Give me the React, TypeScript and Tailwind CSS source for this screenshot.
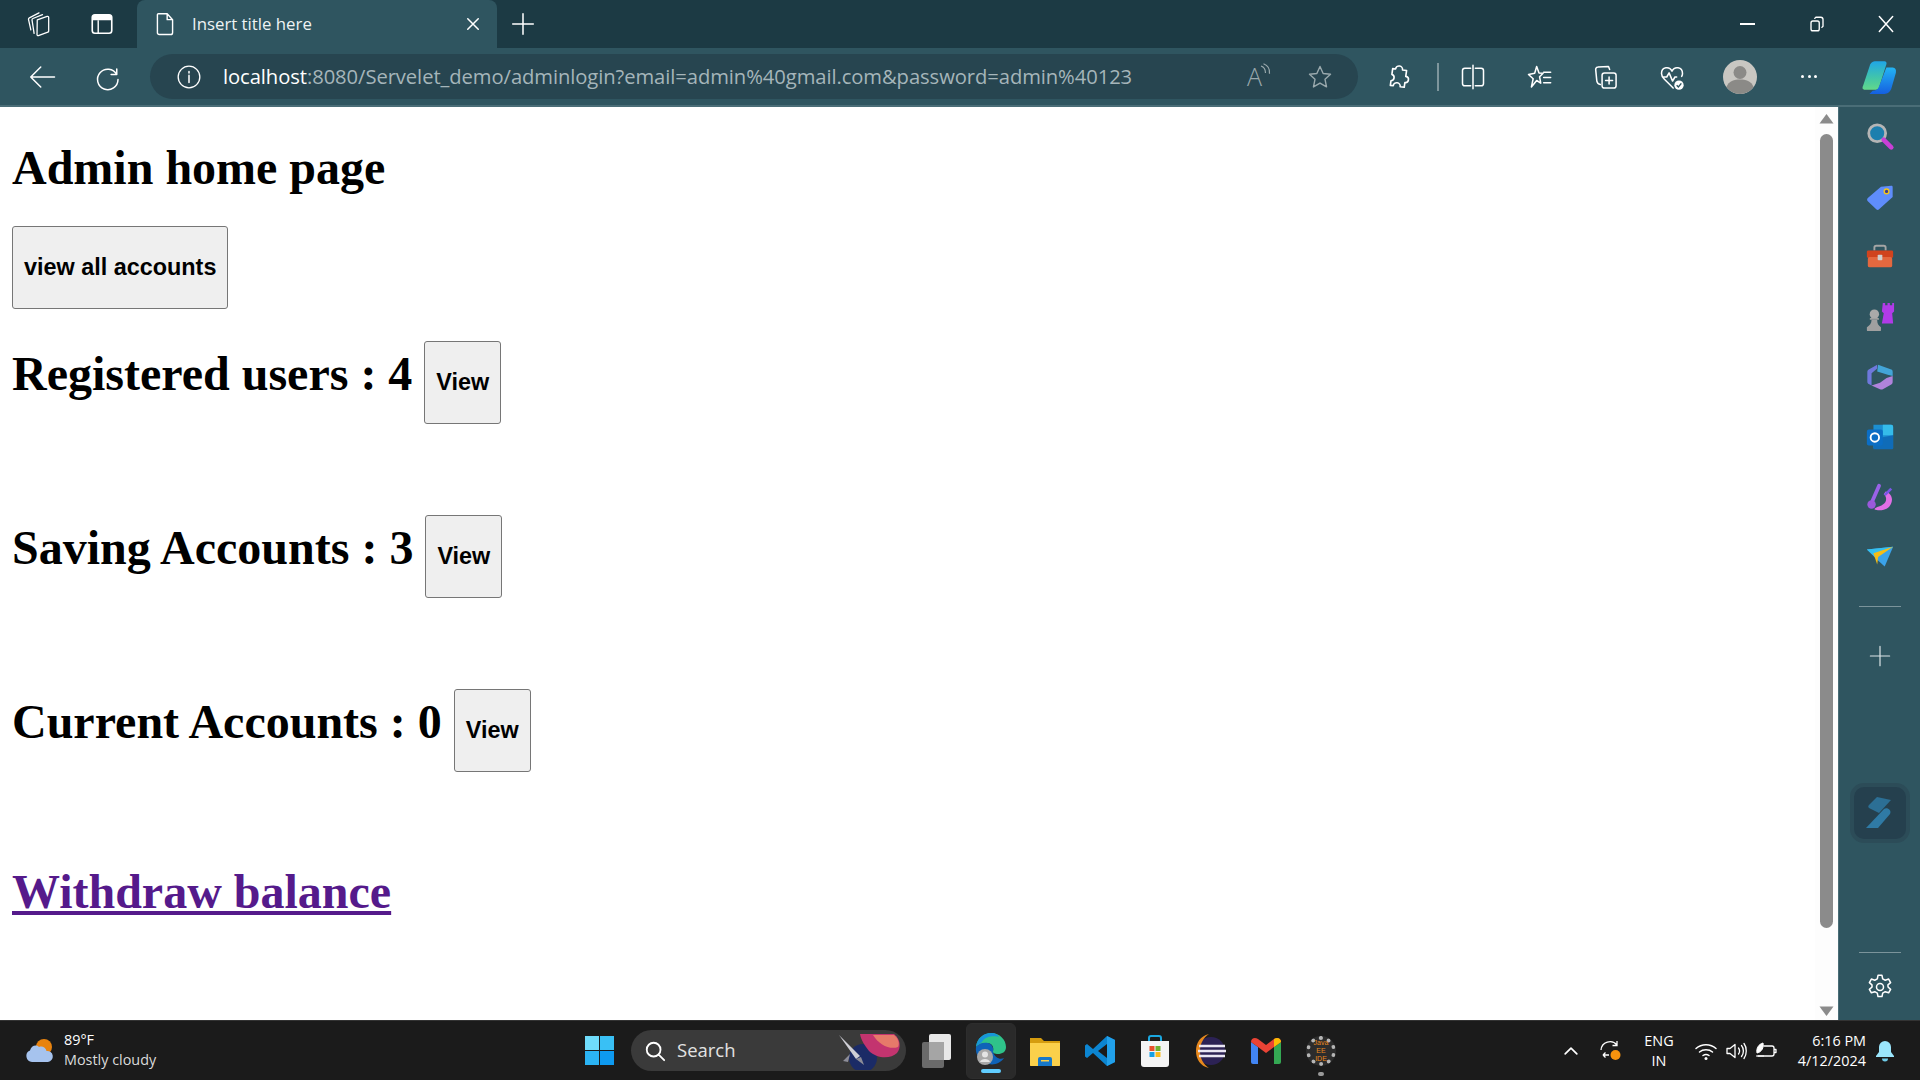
import type { ReactNode } from 'react'

const line = { fill: 'none', stroke: 'currentColor', strokeWidth: 1.5, strokeLinecap: 'round', strokeLinejoin: 'round' } as const

function Ico({ size = 24, children, className = '' }: { size?: number; children: ReactNode; className?: string }) {
  return (
    <svg width={size} height={size} viewBox="0 0 24 24" className={`shrink-0 ${className}`}>
      {children}
    </svg>
  )
}

function Slot({ w, children }: { w: number; children?: ReactNode }) {
  return (
    <div className="flex shrink-0 items-center justify-center" style={{ width: w }}>
      {children}
    </div>
  )
}

function TabBar() {
  return (
    <div className="flex h-12 shrink-0 items-end bg-[#1c3a44] text-white">
      <div className="flex h-12 w-[137px] shrink-0 items-center pl-[25px]">
        <Ico size={28}>
          <g {...line} strokeWidth={1.1}>
            <path d="M10.500 8.500 19 5.500a1 1 0 0 1 1.300 1v11.500a1 1 0 0 1-.7 1L11.500 22a1 1 0 0 1-1.200-1z" />
            <path d="M7.800 20 6 8.500c0-.5.300-1 .8-1.200L15 4" />
            <path d="M5 17 3 8c0-.5.200-1 .7-1.200L12 2.500" />
          </g>
        </Ico>
        <Ico size={26} className="ml-[36px]">
          <rect x="3" y="3.500" width="18" height="17" rx="2.500" fill="none" stroke="currentColor" strokeWidth={1.500} />
          <path d="M3 8.500V6a2.500 2.500 0 0 1 2.500-2.500h13A2.500 2.500 0 0 1 21 6v2.500z" fill="currentColor" />
          <path d="M8.500 8.500v12" stroke="currentColor" strokeWidth={1.300} />
        </Ico>
      </div>
      <div className="flex h-12 w-[360px] shrink-0 items-center rounded-t-lg bg-[#2f5560] pl-[15px]">
        <Ico size={26}>
          <path {...line} strokeWidth={1.300} d="M6 2.500h8l5 5.500v12a1.700 1.700 0 0 1-1.700 1.700H6.700A1.700 1.700 0 0 1 5 20V3.600a1 1 0 0 1 1-1.100zM14 2.500V8h5" />
        </Ico>
        <span className="ml-[14px] w-[272px] font-['Open_Sans',sans-serif] text-[16.800px] leading-none text-[#eef3f4]">Insert title here</span>
        <Ico size={18}>
          <path {...line} strokeWidth={2} d="M5 5l14 14M19 5 5 19" />
        </Ico>
      </div>
      <div className="ml-[13px] flex h-12 items-center">
        <Ico size={26}>
          <path {...line} strokeWidth={1.400} d="M12 2.500v19M2.500 12h19" />
        </Ico>
      </div>
      <div className="ml-auto flex h-12 items-center">
        <Slot w={69}>
          <div className="h-[2px] w-[15px] bg-white" />
        </Slot>
        <Slot w={69}>
          <Ico size={18}>
            <g {...line} strokeWidth={1.800}>
              <rect x="4" y="8" width="11" height="13" rx="2.500" />
              <path d="M9 4.500 10.500 3H17a3 3 0 0 1 3 3v9l-1.500 1.500" />
            </g>
          </Ico>
        </Slot>
        <Slot w={69}>
          <Ico size={20}>
            <path {...line} strokeWidth={1.800} d="M4 3l16 18M20 3 4 21" />
          </Ico>
        </Slot>
      </div>
    </div>
  )
}

function Toolbar() {
  return (
    <div className="flex h-[59px] shrink-0 items-center border-b-2 border-[#4a6d77] bg-[#2f5560] text-white">
      <Slot w={84}>
        <Ico size={30}>
          <path {...line} strokeWidth={1.200} d="M22 12H3M11 4l-8 8 8 8" />
        </Ico>
      </Slot>
      <Slot w={48}>
        <Ico size={30}>
          <path {...line} strokeWidth={1.200} d="M19 5.500V10h-4.500M19 10A8.200 8.200 0 1 0 20 14" />
        </Ico>
      </Slot>
      <div className="ml-[18px] flex h-[45px] w-[1208px] shrink-0 items-center rounded-full bg-[#274550] pl-[26px]">
        <Ico size={26}>
          <circle cx="12" cy="12" r="10" {...line} strokeWidth={1.200} />
          <path d="M12 10.500v6.500M12 7v1.400" {...line} strokeWidth={1.400} />
        </Ico>
        <span className="ml-[21px] font-['Open_Sans',sans-serif] text-[20.200px] leading-none tracking-[-0.07px] text-[#a5b5ba]">
          <span className="text-white">localhost</span>:8080/Servelet_demo/adminlogin?email=admin%40gmail.com&amp;password=admin%40123
        </span>
        <div className="ml-auto flex items-center pr-[24px] text-[#9aa9ad]">
          <span className="relative mr-[44px] font-['Open_Sans',sans-serif] text-[25px] font-light leading-none">
            A
            <svg width="12" height="14" viewBox="0 0 12 14" className="absolute -right-[10px] -top-[1px]">
              <path d="M1 3c3 1 4.500 3.500 4.500 7M3.500 .8c4 1.500 6.500 5 6 10" fill="none" stroke="currentColor" strokeWidth="1.200" />
            </svg>
          </span>
          <Ico size={28}>
            <path {...line} strokeWidth={1.200} d="m12 3 2.700 6 6.300.7-4.700 4.300 1.300 6.500L12 17.200 6.400 20.500l1.300-6.500L3 9.700 9.300 9z" />
          </Ico>
        </div>
      </div>
      <Slot w={79}>
        <Ico size={28}>
          <path {...line} strokeWidth={1.400} d="M9 5.500a3 3 0 0 1 6 0h3.500v5a2.700 2.700 0 0 1 0 5.400V20H15a3 3 0 0 0-6 0H6.500v-4a2.800 2.800 0 0 0 0-5.500v-5z" transform="rotate(8 12 12)" />
        </Ico>
      </Slot>
      <div className="h-[28px] w-[1.500px] shrink-0 bg-[#7e969d]" />
      <Slot w={69}>
        <Ico size={28}>
          <g {...line} strokeWidth={1.300}>
            <path d="M10 4.500H5a2 2 0 0 0-2 2v11a2 2 0 0 0 2 2h5M14 4.500h5a2 2 0 0 1 2 2v11a2 2 0 0 1-2 2h-5M12 2v20" />
          </g>
        </Ico>
      </Slot>
      <Slot w={63}>
        <Ico size={28}>
          <g {...line} strokeWidth={1.300}>
            <path d="m10 3 2 5.500 3.500.3-3 3 1 5.500L10 15l-4.500 5.500 1.500-7-4-3.700 5.300-1z" />
            <path d="M16 8h6M16 12.500h6M16 17h6" />
          </g>
        </Ico>
      </Slot>
      <Slot w={69}>
        <Ico size={28}>
          <g {...line} strokeWidth={1.300}>
            <rect x="9.500" y="8.500" width="12" height="13" rx="2" />
            <path d="M15.500 12v6M12.500 15h6" />
            <path d="M16 5.500 15 3 6 3.500a2 2 0 0 0-2 2l1 10a4 4 0 0 0 3 3" />
          </g>
        </Ico>
      </Slot>
      <Slot w={65}>
        <Ico size={28}>
          <path {...line} strokeWidth={1.300} d="M12 7C10 2.500 3 3 3 9c0 2 1 3.500 2.500 5L13 21.500M4 12h3.500l2-3.500 3 7 2-3.500h1.500M12 7c2-4.500 9-4 9 2 0 1-.3 1.800-.7 2.500" />
          <circle cx="18" cy="19" r="4" fill="white" />
          <path d="m16 19 1.500 1.500 2.500-3" fill="none" stroke="#2f5560" strokeWidth="1.200" />
        </Ico>
      </Slot>
      <Slot w={70}>
        <svg width="36" height="36" viewBox="0 0 36 36">
          <circle cx="18" cy="18" r="17" fill="#c9c7c2" />
          <circle cx="18" cy="13.500" r="6.500" fill="#8b8a87" />
          <path d="M4.500 28c2-6 8-7.500 13.500-7.500s11.500 1.500 13.500 7.500A17 17 0 0 1 18 35 17 17 0 0 1 4.500 28z" fill="#8b8a87" />
        </svg>
      </Slot>
      <Slot w={69}>
        <div className="flex gap-[3.500px]">
          <div className="size-[3px] rounded-full bg-white" />
          <div className="size-[3px] rounded-full bg-white" />
          <div className="size-[3px] rounded-full bg-white" />
        </div>
      </Slot>
      <Slot w={70}>
        <svg width="38" height="38" viewBox="0 0 36 36">
          <defs>
            <linearGradient id="cop1" x1="0" y1="0" x2="0" y2="1">
              <stop offset="0" stopColor="#1fa6e8" />
              <stop offset="0.600" stopColor="#43c6a8" />
              <stop offset="1" stopColor="#62d88a" />
            </linearGradient>
            <linearGradient id="cop2" x1="0" y1="0" x2="0" y2="1">
              <stop offset="0" stopColor="#23b4f4" />
              <stop offset="1" stopColor="#1560e0" />
            </linearGradient>
          </defs>
          <path d="M14 3h9c2 0 2.500 1.500 2 3l-7 22c-.6 1.500-1.500 2-3 2H5c-3 0-3-2-2-4l6-18c.7-3 2.500-5 5-5z" fill="url(#cop1)" />
          <path d="M25 9h6c2.500 0 3.500 2 3 5l-4 14c-1 4-3.500 6-7 6H9l3-3c3 0 5-1 6-4z" fill="url(#cop2)" />
        </svg>
      </Slot>
    </div>
  )
}

function ViewButton({ label, className = '' }: { label: string; className?: string }) {
  return (
    <button
      type="button"
      className={`h-[83px] rounded-[3px] border border-[#767676] bg-[#efefef] px-[11px] font-['Liberation_Sans',sans-serif] text-[23.400px] font-bold text-black ${className}`}
    >
      {label}
    </button>
  )
}

function StatRow({ label, className }: { label: string; className: string }) {
  return (
    <div className={`flex items-start ${className}`}>
      <h2 className="mt-[7px] text-[48px] font-bold leading-[52px]">{label}</h2>
      <ViewButton label="View" className="ml-[12px]" />
    </div>
  )
}

function Page() {
  return (
    <div className="min-w-0 flex-1 overflow-hidden bg-white pl-3 font-['Liberation_Serif',serif] text-black">
      <h1 className="mt-[35px] text-[48px] font-bold leading-[52px]">Admin home page</h1>
      <ViewButton label="view all accounts" className="mt-[32px]" />
      <StatRow label="Registered users : 4" className="mt-[32px]" />
      <StatRow label="Saving Accounts : 3" className="mt-[91px]" />
      <StatRow label="Current Accounts : 0" className="mt-[91px]" />
      <a href="#" className="mt-[94px] block w-fit text-[48px] font-bold leading-[52px] text-[#551a8b] underline">
        Withdraw balance
      </a>
    </div>
  )
}

function Scrollbar() {
  return (
    <div className="flex w-[23px] shrink-0 flex-col items-center bg-[#fdfdfd] pt-[6px]">
      <svg width="15" height="11" viewBox="0 0 15 11">
        <path d="M7.500 1 14.500 10.500H.5z" fill="#8b8b8b" />
      </svg>
      <div className="mt-[10px] h-[794px] w-[13px] rounded-full bg-[#8b8b8b]" />
      <svg width="15" height="11" viewBox="0 0 15 11" className="mt-[78px]">
        <path d="M7.500 10 14.500.5H.5z" fill="#8b8b8b" />
      </svg>
    </div>
  )
}

function Sidebar() {
  return (
    <div className="flex w-[82px] shrink-0 flex-col items-center border-l border-[#4a6d77] bg-[#2f5560]">
      <div className="mt-[12px] flex flex-col items-center gap-[24px]">
        <svg width="30" height="36" viewBox="0 0 32 32">
          <circle cx="13" cy="12" r="9" fill="#1d7fae" stroke="#b5b5b5" strokeWidth="3" />
          <path d="m20 19 8 8" stroke="#c93fd6" strokeWidth="5" strokeLinecap="round" />
        </svg>
        <svg width="30" height="36" viewBox="0 0 32 32">
          <path d="M3 17 17 5l11-1c1 0 1.500.5 1.500 1.500V16L15 29c-1 1-2 1-3 0l-9-8.500c-1-1-1-2.500 0-3.500z" fill="#5f8dfb" />
          <circle cx="23" cy="10" r="2.500" fill="#3c3c8c" stroke="#f5c518" strokeWidth="1.500" />
        </svg>
        <svg width="30" height="36" viewBox="0 0 32 32">
          <path d="M10 9V6a2 2 0 0 1 2-2h8a2 2 0 0 1 2 2v3" fill="none" stroke="#a5a5a5" strokeWidth="2" />
          <rect x="2" y="9" width="28" height="8" rx="1.500" fill="#d0431e" />
          <rect x="3" y="16" width="26" height="11" rx="2" fill="#e4683f" />
          <rect x="13.500" y="13.500" width="5" height="6" rx="1" fill="#cfcfcf" />
        </svg>
        <svg width="30" height="36" viewBox="0 0 32 32">
          <path d="M19 1h2.500v2.500H24V1h2.500v2.500H29V1h2v9l-2 2 1 11h-12l2-11-2-2z" fill="#b13be8" />
          <circle cx="10" cy="13" r="5" fill="#a9a9a9" />
          <rect x="5" y="17" width="10" height="2" rx="1" fill="#a0a0a0" />
          <path d="M7 19h6c0 4 1 6 4 8v3a1 1 0 0 1-1 1H3a1 1 0 0 1-1-1v-3c3-2 5-4 5-8z" fill="#a0a0a0" />
        </svg>
        <svg width="30" height="36" viewBox="0 0 32 32">
          <path d="M14 3 28 8c1 .5 1.500 1 1.500 2.500V15l-7-2L13 10z" fill="#43a5d8" />
          <path d="M13 3 4 8c-1 .5-1.500 1.500-1.500 3V21c0 1 .5 2 1.500 2.500l3 1.500V12l6-5z" fill="#6f78dc" />
          <path d="M29.500 15V21c0 1.500-.5 2.500-1.500 3l-9 5c-1 .5-2 .5-3 0L7 25l9-3 7-5z" fill="#b083dc" />
        </svg>
        <svg width="30" height="36" viewBox="0 0 32 32">
          <path d="M9 3h19a2 2 0 0 1 2 2v23H9z" fill="#1c8fd0" />
          <path d="M19 3h9a2 2 0 0 1 2 2v9H19z" fill="#35bcea" />
          <path d="M9 18 30 14v14a1 1 0 0 1-1 1H9z" fill="#0f6cb8" />
          <rect x="2" y="8" width="17" height="17" rx="2" fill="#0b6ec5" />
          <circle cx="10.500" cy="16.500" r="4.500" fill="none" stroke="white" strokeWidth="2" />
        </svg>
        <svg width="30" height="36" viewBox="0 0 32 32">
          <path d="M15 4 8 20" stroke="#9a62e8" strokeWidth="4" strokeLinecap="round" />
          <circle cx="7" cy="24" r="4.500" fill="#9b59dc" />
          <path d="M22 10c7 2 9 10 4 16-4 5-13 5-16 3 2-3 5-2 9-5 4-2 5-8 1-11z" fill="#e26fe6" />
          <path d="m20 13 7-7 2 2-7 7z" fill="#7a56e8" />
        </svg>
        <svg width="30" height="36" viewBox="0 0 32 32">
          <path d="M2 8 30 5 21 26 13 19z" fill="#3ba3ea" />
          <path d="M2 8 30 5 11 16z" fill="#35c0f0" />
          <path d="M30 5 9 12l4 12 1-8z" fill="#f6bd16" />
        </svg>
      </div>
      <div className="mt-[31px] h-px w-[42px] bg-[#7b949b]" />
      <Ico size={22} className="mt-[38px] text-[#dde5e7]">
        <path {...line} strokeWidth={1.300} d="M12 1.500v21M1.500 12h21" />
      </Ico>
      <div className="mt-[116px] flex size-[60px] items-center justify-center rounded-[14px] border-4 border-[#2c4c58] bg-[#25404e]">
        <svg width="30" height="36" viewBox="0 0 30 36">
          <path d="M12 2 26 5 14 18 4 13c-1-1-1-2 0-3z" fill="#2c6f95" />
          <path d="M19 14c3-2 8 1 6 5L13 33H1z" fill="#2f7aa5" />
        </svg>
      </div>
      <div className="mt-[109px] h-px w-[42px] bg-[#7b949b]" />
      <Ico size={28} className="mt-[20px] text-white">
        <g {...line} strokeWidth={1.300}>
          <circle cx="12" cy="12" r="3" />
          <path d="M10.300 2h3.400l.6 3 2.200 1.200 2.900-1 1.700 3-2.300 2 .1 1.800 2.200 2-1.700 3-2.900-1-2.200 1.200-.6 3h-3.400l-.6-3-2.200-1.200-2.900 1-1.700-3 2.300-2-.1-1.800-2.200-2 1.700-3 2.900 1 2.200-1.200z" />
        </g>
      </Ico>
    </div>
  )
}

function Taskbar() {
  return (
    <div className="flex h-[60px] shrink-0 items-center border-t border-[#333] bg-[#1b1b1b] font-['Open_Sans',sans-serif] text-white">
      <div className="flex w-[585px] shrink-0 items-center pl-[24px]">
        <svg width="32" height="32" viewBox="0 0 32 32">
          <circle cx="20" cy="12" r="8" fill="#e8830f" />
          <path d="M8 27a6 6 0 0 1-2-11.500C7 11 12 9 15 12c3-1.500 7 .5 7.500 4a5.500 5.500 0 0 1 1.500 11z" fill="#a6c3ee" />
        </svg>
        <div className="ml-[8px] -mt-[2px] text-[14.400px] leading-[20px]">
          <div>89°F</div>
          <div className="text-[#dadada]">Mostly cloudy</div>
        </div>
      </div>
      <div className="grid size-[29px] shrink-0 grid-cols-2 gap-[1px]">
        <div className="bg-[#6fdcfb]" />
        <div className="bg-[#39c0f5]" />
        <div className="bg-[#2bb4f4]" />
        <div className="bg-[#0e9af0]" />
      </div>
      <div className="ml-[17px] flex h-[41px] w-[275px] shrink-0 items-center rounded-full bg-[#3a3a3a] pl-[13px]">
        <Ico size={22}>
          <path {...line} strokeWidth={2} d="M16 16l6 6M18 10.500a7.500 7.500 0 1 1-15 0 7.500 7.500 0 0 1 15 0z" />
        </Ico>
        <span className="ml-[11px] text-[18.500px] leading-none text-[#e2e2e2]">Search</span>
        <svg width="64" height="38" viewBox="0 0 64 38" className="ml-auto mr-[4px]">
          <circle cx="25" cy="26" r="14" fill="#1b2b66" />
          <path d="M22 2h34c7 6 7 14 3 19-6 6-20 6-28-2-4-5-8-11-9-17z" fill="#c3346f" />
          <path d="M35 3h21c4 3 6 8 4 12-8 3-19-2-25-12z" fill="#e67a6a" />
          <path d="M1 3 22 24l-4 3z" fill="#cfcfd6" />
          <path d="M12 22l-7 7 5 1zM18 27l8 6-3-8z" fill="#8d8d98" />
        </svg>
      </div>
      <div className="flex w-[47px] shrink-0 justify-end pr-[1px]">
        <svg width="30" height="36" viewBox="0 0 30 36">
          <rect x="0" y="9" width="22" height="26" rx="2" fill="#6a6a6a" />
          <rect x="7" y="1" width="22" height="26" rx="2" fill="#e8e8e8" />
          <rect x="7" y="9" width="15" height="18" fill="#a5a5a5" />
        </svg>
      </div>
      <div className="ml-[13px] flex h-[56px] w-[50px] shrink-0 flex-col items-center rounded-md border border-[#2d2d2d] bg-[#2a2a2a]">
        <svg width="32" height="34" viewBox="0 0 32 34" className="mt-[8px]">
          <path d="M1 15C2 6 9 1 16 1c9 0 15 7 15 14 0 5-4 7-8 7-3 0-6-1-5-3 1-4-1-8-6-8-5 0-9 2-11 4z" fill="#2fc38a" />
          <path d="M1 15C2 6 9 1 16 1c5 0 7 2 8 4-2-1-14-2-17 5-2 2-5 3-6 5z" fill="#1795d8" />
          <path d="M1 15c3-4 8-5 12-4 4 1 6 5 5 9 2 6 7 8 11 6-4 6-12 8-18 5C4 28 0 22 1 15z" fill="#0f63b8" />
          <circle cx="10" cy="25" r="8" fill="#a8a8a8" />
          <circle cx="10" cy="22.500" r="3" fill="#e4e4e4" />
          <path d="M5 30c1-4 9-4 10 0z" fill="#e4e4e4" />
        </svg>
        <div className="mt-[3px] h-[4px] w-[20px] rounded-full bg-[#60cdff]" />
      </div>
      <Slot w={58}>
        <svg width="32" height="32" viewBox="0 0 32 32">
          <path d="M1 3h11l3 3h16v24a1 1 0 0 1-1 1H2a1 1 0 0 1-1-1z" fill="#d59c0f" />
          <path d="M1 8h30v22a1 1 0 0 1-1 1H2a1 1 0 0 1-1-1z" fill="#fbd04b" />
          <path d="M9 31v-7a2 2 0 0 1 2-2h10a2 2 0 0 1 2 2v7z" fill="#1778c9" />
          <rect x="12" y="25" width="8" height="1.500" fill="#fbd04b" />
        </svg>
      </Slot>
      <Slot w={52}>
        <svg width="32" height="32" viewBox="0 0 32 32">
          <path d="M23 1 31 5v22l-8 4L9 18l-6 5-2-1.500v-11L3 9l6 5z" fill="#0c85d1" />
          <path d="M23 9 14 16l9 7z" fill="#1b1b1b" />
          <path d="M23 1 31 5v22l-8 4z" fill="#21a0ea" />
        </svg>
      </Slot>
      <Slot w={58}>
        <svg width="30" height="34" viewBox="0 0 30 34">
          <path d="M9 8V4a2 2 0 0 1 2-2h8a2 2 0 0 1 2 2v4" fill="none" stroke="#1aa7e0" strokeWidth="2" />
          <path d="M1 7h28v23a3 3 0 0 1-3 3H4a3 3 0 0 1-3-3z" fill="#f4f4f4" />
          <rect x="9.500" y="12" width="5" height="5" fill="#e8502a" />
          <rect x="15.500" y="12" width="5" height="5" fill="#6fb02f" />
          <rect x="9.500" y="18" width="5" height="5" fill="#17a0e5" />
          <rect x="15.500" y="18" width="5" height="5" fill="#fbbb1f" />
        </svg>
      </Slot>
      <Slot w={52}>
        <svg width="32" height="38" viewBox="0 0 32 38">
          <circle cx="17" cy="19" r="14" fill="#2c2255" />
          <path d="M15 2C6 4 2 11 2 19s4 15 13 17C9 32 6 26 6 19S9 6 15 2z" fill="#e8891e" />
          <path d="M5 14h26M4 19h28M5 24h26" stroke="#e9e6f3" strokeWidth="2.500" />
        </svg>
      </Slot>
      <Slot w={60}>
        <svg width="30" height="28" viewBox="0 0 30 28">
          <path d="M2 27a2 2 0 0 1-2-2V5l7 5v17z" fill="#4285f4" />
          <path d="M23 27V10l7-5v20a2 2 0 0 1-2 2z" fill="#34a853" />
          <path d="M0 5c0-4 4-5 7-3l8 6 8-6c3-2 7-1 7 3l-7 5-8 6-8-6z" fill="#ea4335" />
          <path d="M23 2c3-2 7-1 7 3l-7 5z" fill="#fbbc04" />
        </svg>
      </Slot>
      <div className="flex w-[50px] shrink-0 flex-col items-center">
        <div className="relative mt-[10px] flex size-[30px] items-center justify-center rounded-full border-[4px] border-dotted border-[#b5b5b5] bg-[#2c2c2c]">
          <span className="text-center font-['Liberation_Sans',sans-serif] text-[7px] leading-[8px] text-[#e8891e]">Java EE IDE</span>
        </div>
        <div className="mt-[6px] h-[4px] w-[6px] rounded-full bg-[#9a9a9a]" />
      </div>
      <div className="ml-[215px] flex items-center">
        <Ico size={20}>
          <path {...line} strokeWidth={2} d="m5 15.500 7-7 7 7" />
        </Ico>
        <div className="ml-[18px]">
          <svg width="24" height="24" viewBox="0 0 24 24">
            <path d="M2 11a9 9 0 0 1 16-5M18 2v4.500h-4.500M4 16h6M4 16l2.500-2.500M4 16l2.500 2.500" fill="none" stroke="white" strokeWidth="1.300" />
            <circle cx="16.500" cy="16" r="5" fill="#f7930e" />
          </svg>
        </div>
        <div className="ml-[12px] w-[48px] text-center text-[14.400px] leading-[20px]">
          <div>ENG</div>
          <div>IN</div>
        </div>
        <Ico size={24} className="ml-[11px]">
          <path {...line} strokeWidth={1.500} d="M2 9.500c5.500-5 14.500-5 20 0M5.500 13c3.500-3 9.500-3 13 0M9 16.500c1.800-1.300 4.200-1.300 6 0" />
          <circle cx="12" cy="19.500" r="1.500" fill="white" />
        </Ico>
        <Ico size={24} className="ml-[6px]">
          <path {...line} strokeWidth={1.300} d="M3 9.500v5h3l5 4v-13l-5 4zM14.500 9c1.300 1.800 1.300 4.200 0 6M17.500 6.500c2.500 3 2.500 8 0 11M20 4.500c3 4 3 11 0 15" />
        </Ico>
        <Ico size={24} className="ml-[5px]">
          <path {...line} strokeWidth={1.300} d="M11 7h8a2 2 0 0 1 2 2v6a2 2 0 0 1-2 2H5M21.500 10.500H23v3h-1.500" />
          <path d="M4 14c-1-5 2-9 6-10 1 4-1 9-6 10zM3 17h8" fill="white" stroke="white" />
        </Ico>
        <div className="ml-[13px] w-[76px] whitespace-nowrap text-right text-[14.400px] leading-[20px]">
          <div>6:16 PM</div>
          <div>4/12/2024</div>
        </div>
        <svg width="18" height="22" viewBox="0 0 18 22" className="ml-[10px]">
          <path d="M9 1a6 6 0 0 1 6 6v5l3 4v1H0v-1l3-4V7a6 6 0 0 1 6-6z" fill="#9be6fc" />
          <path d="M6 18.500h6a3 3 0 0 1-6 0z" fill="#6fcbe8" />
        </svg>
      </div>
    </div>
  )
}

export default function App() {
  return (
    <div className="flex h-screen w-full flex-col overflow-hidden">
      <TabBar />
      <Toolbar />
      <div className="flex min-h-0 flex-1">
        <Page />
        <Scrollbar />
        <Sidebar />
      </div>
      <Taskbar />
    </div>
  )
}
